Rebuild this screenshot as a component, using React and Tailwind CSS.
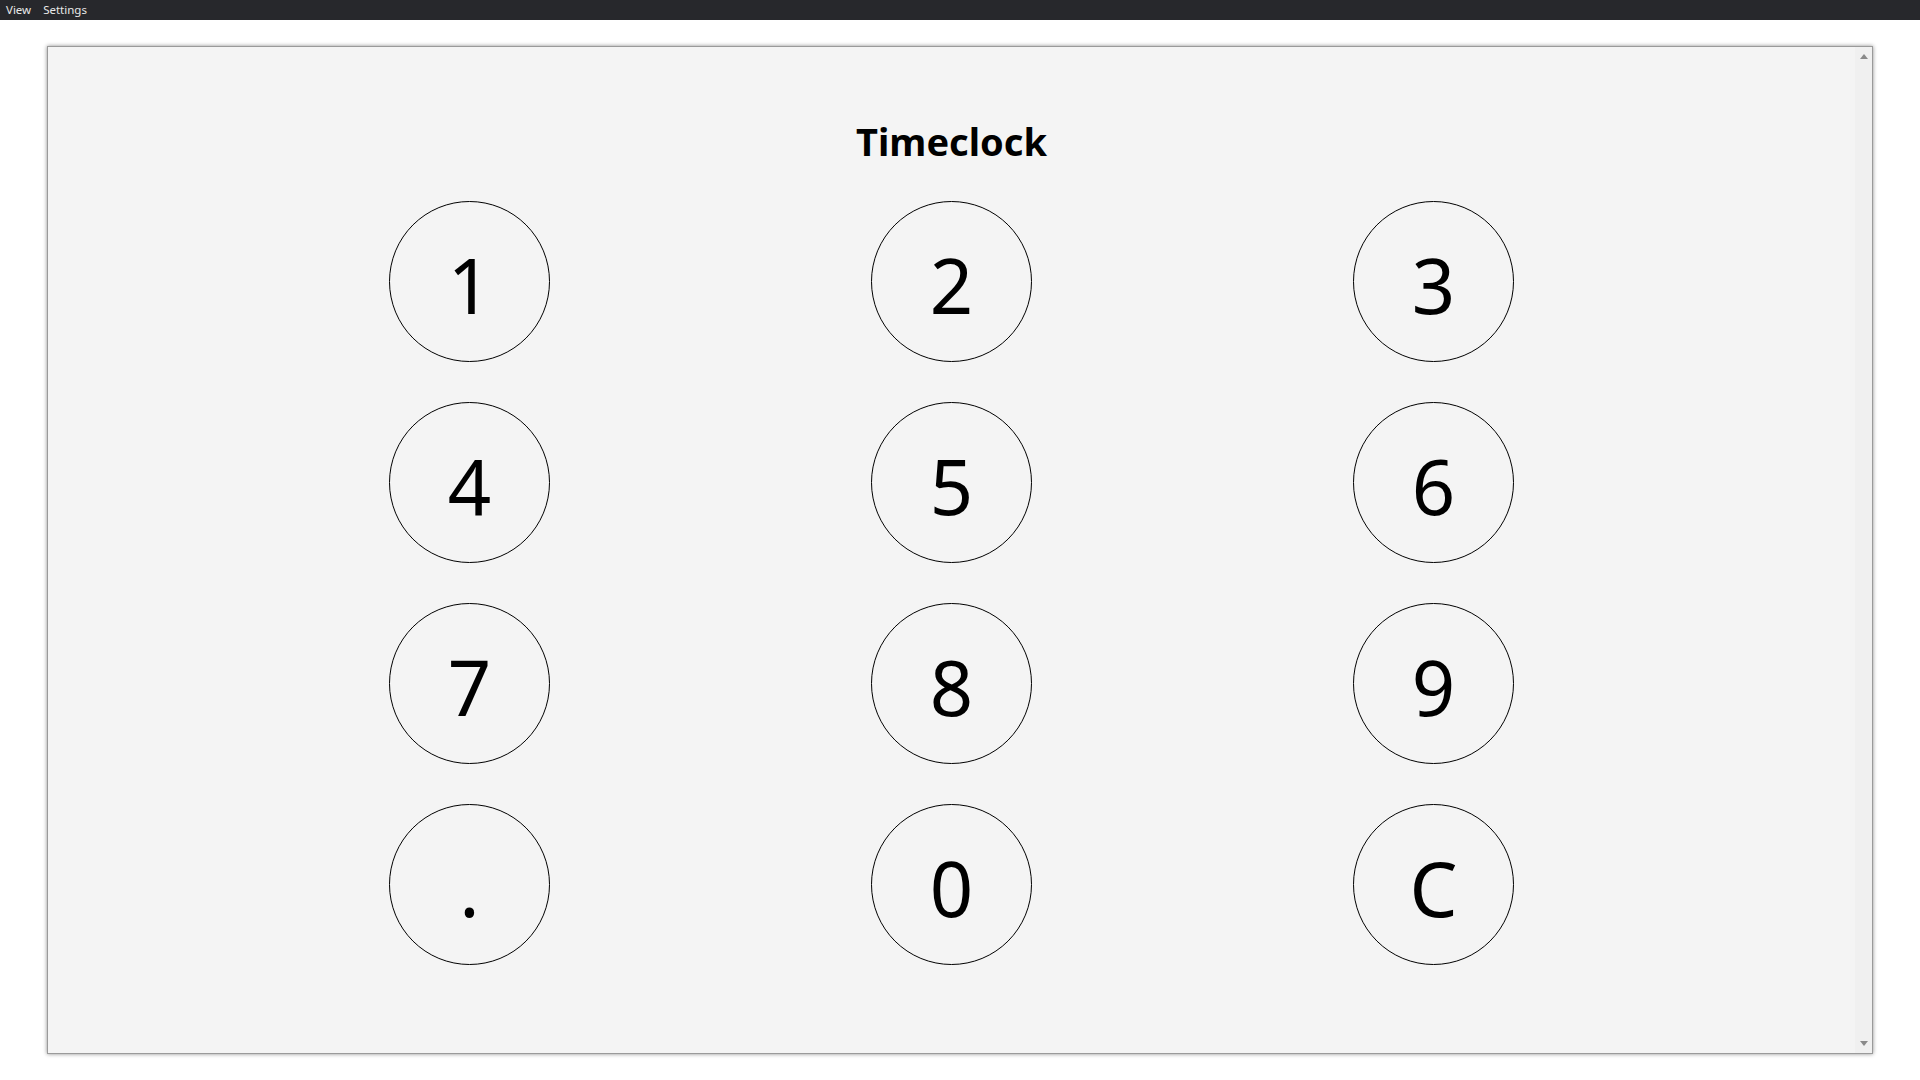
import React from "react";

const keys = ["1", "2", "3", "4", "5", "6", "7", "8", "9", ".", "0", "C"];

export default function App() {
  return (
    <div className="w-[1920px] h-[1080px] bg-white flex flex-col overflow-hidden" style={{ fontFamily: '"Noto Sans", "Open Sans", sans-serif' }}>
      <div className="h-[20px] bg-[#27282c] flex items-center gap-[12px] pl-[6px] text-[11.5px] leading-none text-[#e8e8e8]">
        <span>View</span>
        <span>Settings</span>
      </div>
      <div className="flex-1 px-[47px] pt-[26px] pb-[26px] flex">
        <div className="flex-1 flex border border-[#9a9a9a] bg-[#f4f4f4] shadow-[0_0_4px_rgba(0,0,0,0.45)]">
          <div className="flex-1 flex flex-col items-center pt-[75px]">
            <h1 className="text-[38px] leading-[38px] font-bold text-black">Timeclock</h1>
            <div className="mt-[41px] grid grid-cols-[repeat(3,161px)] gap-x-[321px] gap-y-[40px]">
              {keys.map((k) => (
                <button
                  key={k}
                  className="w-[161px] h-[161px] rounded-full border border-black flex items-center justify-center pt-[6px] text-[76px] leading-none text-black"
                >
                  {k}
                </button>
              ))}
            </div>
          </div>
          <div className="w-[17px] bg-[#f0f0f0] flex flex-col items-center justify-between py-[7px]">
            <svg width="8" height="5" viewBox="0 0 8 5"><path d="M0 5 L4 0 L8 5 Z" fill="#8a8a8a" /></svg>
            <svg width="8" height="5" viewBox="0 0 8 5"><path d="M0 0 L4 5 L8 0 Z" fill="#8a8a8a" /></svg>
          </div>
        </div>
      </div>
    </div>
  );
}
